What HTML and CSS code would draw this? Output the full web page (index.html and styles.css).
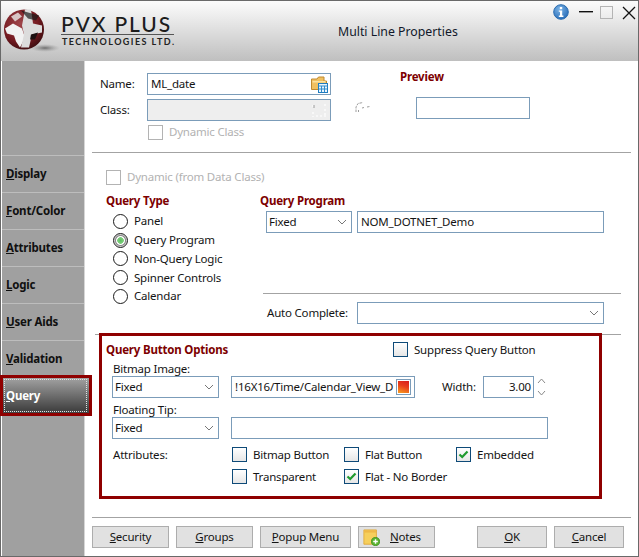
FILE: index.html
```html
<!DOCTYPE html>
<html lang="en">
<head>
<meta charset="utf-8">
<title>Multi Line Properties</title>
<link rel="stylesheet" href="styles.css">
</head>
<body>
<div class="window">
  <header class="titlebar">
    <svg class="globe" width="56" height="58" viewBox="0 0 56 58">
      <defs>
        <radialGradient id="ball" cx="0.4" cy="0.35" r="0.75">
          <stop offset="0" stop-color="#a0454a"/>
          <stop offset="0.6" stop-color="#741a20"/>
          <stop offset="1" stop-color="#2f0a0c"/>
        </radialGradient>
        <radialGradient id="shade">
          <stop offset="0" stop-color="#555" stop-opacity="0.8"/>
          <stop offset="1" stop-color="#999" stop-opacity="0"/>
        </radialGradient>
      </defs>
      <ellipse cx="41" cy="46" rx="15" ry="4" fill="url(#shade)"/>
      <g transform="translate(-3 -0.5)">
        <circle cx="23" cy="28" r="20" fill="url(#ball)"/>
        <path d="M4 27 L12 22 L21 27 L24 36 L19 46 L15 40 L13 34 L6 32 Z" fill="#f2f2f2"/>
        <path d="M10 15 L17 11 L21 15 L14 20 Z" fill="#d8c4c4"/>
        <path d="M24 8 L30 8 L32 22 L41 24 L41 31 L31 33 L28 46 L20 46 L23 33 L21 24 Z" fill="#dcdcdc"/>
        <path d="M20 9 L38 14 L35 19 L27 17 Z" fill="#191919" opacity="0.7"/>
        <path d="M30 33 L37 31 L34 38 L29 38 Z" fill="#1c1010"/>
      </g>
    </svg>
    <div class="brand">
      <div class="brand-name">PVX PLUS</div>
      <div class="brand-sub">TECHNOLOGIES LTD.</div>
    </div>
    <div class="dialog-title">Multi Line Properties</div>
    <div class="controls">
      <svg class="ctl-info" width="16" height="16" viewBox="0 0 16 16">
        <defs>
          <radialGradient id="inf" cx="0.4" cy="0.3" r="0.8">
            <stop offset="0" stop-color="#7db4e6"/>
            <stop offset="1" stop-color="#1f66b4"/>
          </radialGradient>
        </defs>
        <circle cx="8" cy="8" r="7.3" fill="url(#inf)" stroke="#2a6cb0"/>
        <rect x="6.8" y="3" width="2.4" height="2.2" fill="#fff"/>
        <path d="M5.8 6.4 H9.2 V11.6 H10.4 V13 H5.8 V11.6 H7 V7.8 H5.8 Z" fill="#fff"/>
      </svg>
      <svg class="ctl-min" width="14" height="2" viewBox="0 0 14 2"><rect width="14" height="1.4" fill="#111"/></svg>
      <svg class="ctl-max" width="13" height="13" viewBox="0 0 13 13"><rect x="0.5" y="0.5" width="12" height="12" fill="none" stroke="#b4b4b4"/></svg>
      <svg class="ctl-close" width="14" height="14" viewBox="0 0 14 14"><path d="M1 1 L13 13 M13 1 L1 13" stroke="#111" stroke-width="1.3" fill="none"/></svg>
    </div>
  </header>

  <div class="body">
    <nav class="sidebar">
      <div class="tab"><span><u>D</u>isplay</span></div>
      <div class="tab"><span><u>F</u>ont/Color</span></div>
      <div class="tab"><span><u>A</u>ttributes</span></div>
      <div class="tab"><span><u>L</u>ogic</span></div>
      <div class="tab"><span><u>U</u>ser Aids</span></div>
      <div class="tab"><span><u>V</u>alidation</span></div>
      <div class="tab tab-active"><span class="tab-focus"><u>Q</u>uery</span></div>
    </nav>

    <main class="content">
      <section class="top">
        <div class="identity">
          <div class="id-row">
            <label class="id-label">Name:</label>
            <div class="field field-name"><span>ML_date</span>
              <svg class="inline-icon" width="17" height="17" viewBox="0 0 17 17">
                <path d="M0.5 3 H6 L7.5 1 H13 V5 H15.5 V13.5 H0.5 Z" fill="#f0c060" stroke="#c08a30"/>
                <rect x="1.5" y="5" width="13" height="1.5" fill="#fbe2a0"/>
                <rect x="7.5" y="7.5" width="9" height="9" fill="#eaf4fc" stroke="#1e7cc0"/>
                <path d="M7.5 10 H16.5 M10.5 10 V16 M13.5 10 V16 M8 13 H16" stroke="#2f8ccc" fill="none"/>
              </svg>
            </div>
          </div>
          <div class="id-row">
            <label class="id-label">Class:</label>
            <div class="field field-name field-off">
              <svg class="inline-icon" width="17" height="17" viewBox="0 0 17 17">
                <path d="M2 3 V7 M2 10 V15 M5 14 H15 M14 2 V4 M14 7 V14" stroke="#fff" stroke-width="1.2" stroke-dasharray="2 2" fill="none"/>
                <path d="M3 3 V6" stroke="#9a9a9a" fill="none"/>
              </svg>
            </div>
          </div>
          <div class="check-row check-dyn-class">
            <i class="box box-off"></i><span class="off-text">Dynamic Class</span>
          </div>
        </div>
        <svg class="spin-mark" width="18" height="14" viewBox="0 0 18 14">
          <path d="M1 11 V6 L3 2.5 L8 1.5 M3.5 11 V9 M7 7 L9 6.5 M12 6 L15 5.5" stroke="#9c9c9c" stroke-width="1" stroke-dasharray="2.5 1" fill="none"/>
        </svg>
        <div class="preview">
          <div class="heading">Preview</div>
          <div class="field preview-box"></div>
        </div>
      </section>

      <div class="rule rule-a"></div>

      <div class="check-row check-dyn-data">
        <i class="box box-off"></i><span class="off-text">Dynamic (from Data Class)</span>
      </div>

      <section class="query">
        <div class="query-type">
          <div class="heading">Query Type</div>
          <ul class="radios">
            <li><i class="radio"></i>Panel</li>
            <li><i class="radio radio-on"></i>Query Program</li>
            <li><i class="radio"></i>Non-Query Logic</li>
            <li><i class="radio"></i>Spinner Controls</li>
            <li><i class="radio"></i>Calendar</li>
          </ul>
        </div>
        <div class="query-program">
          <div class="heading">Query Program</div>
          <div class="program-row">
            <div class="field select select-a"><span>Fixed</span>
              <svg class="chev" width="10" height="6" viewBox="0 0 10 6"><path d="M1 1 L5 5 L9 1" stroke="#777" fill="none"/></svg>
            </div>
            <div class="field field-program"><span>NOM_DOTNET_Demo</span></div>
          </div>
          <div class="rule rule-b"></div>
          <div class="auto-row">
            <label class="auto-label">Auto Complete:</label>
            <div class="field select field-program">
              <span></span>
              <svg class="chev" width="10" height="6" viewBox="0 0 10 6"><path d="M1 1 L5 5 L9 1" stroke="#777" fill="none"/></svg>
            </div>
          </div>
        </div>
      </section>

      <div class="rule rule-c"></div>

      <section class="options">
        <div class="opt-head">
          <div class="heading opt-title">Query Button Options</div>
          <div class="check-row"><i class="box"></i><span>Suppress Query Button</span></div>
        </div>
        <div class="opt-label">Bitmap Image:</div>
        <div class="opt-row">
          <div class="field select select-b"><span>Fixed</span>
            <svg class="chev" width="10" height="6" viewBox="0 0 10 6"><path d="M1 1 L5 5 L9 1" stroke="#777" fill="none"/></svg>
          </div>
          <div class="field field-bitmap"><span class="clip">!16X16/Time/Calendar_View_D</span>
            <span class="pick"><i class="pick-img"></i></span>
          </div>
          <span class="width-label">Width:</span>
          <div class="field field-width"><span>3.00</span></div>
          <div class="spinner">
            <svg width="9" height="6" viewBox="0 0 9 6"><path d="M1 5 L4.5 1 L8 5" stroke="#8a8a8a" fill="none"/></svg>
            <svg width="9" height="6" viewBox="0 0 9 6"><path d="M1 1 L4.5 5 L8 1" stroke="#8a8a8a" fill="none"/></svg>
          </div>
        </div>
        <div class="opt-label">Floating Tip:</div>
        <div class="opt-row">
          <div class="field select select-b"><span>Fixed</span>
            <svg class="chev" width="10" height="6" viewBox="0 0 10 6"><path d="M1 1 L5 5 L9 1" stroke="#777" fill="none"/></svg>
          </div>
          <div class="field field-tip"></div>
        </div>
        <div class="attrs">
          <div class="attrs-label">Attributes:</div>
          <div class="attrs-grid">
            <div class="check-row"><i class="box"></i><span>Bitmap Button</span></div>
            <div class="check-row"><i class="box"></i><span>Flat Button</span></div>
            <div class="check-row"><i class="box box-on"><svg width="11" height="9" viewBox="0 0 11 9"><path d="M1.5 4.5 L4.2 7 L9.5 1.5" stroke="#1f9a2e" stroke-width="2.2" fill="none"/></svg></i><span>Embedded</span></div>
            <div class="check-row"><i class="box"></i><span>Transparent</span></div>
            <div class="check-row"><i class="box box-on"><svg width="11" height="9" viewBox="0 0 11 9"><path d="M1.5 4.5 L4.2 7 L9.5 1.5" stroke="#1f9a2e" stroke-width="2.2" fill="none"/></svg></i><span>Flat - No Border</span></div>
          </div>
        </div>
      </section>

      <div class="rule rule-a rule-d"></div>

      <footer class="buttons">
        <button class="btn btn-sec"><u>S</u>ecurity</button>
        <button class="btn btn-sec"><u>G</u>roups</button>
        <button class="btn btn-popup"><u>P</u>opup Menu</button>
        <button class="btn btn-sec btn-notes">
          <svg width="17" height="17" viewBox="0 0 19 19">
            <path d="M1 1 H15 V13 L11 17 H1 Z" fill="#f6cf5c" stroke="#e0a93a"/>
            <rect x="1.5" y="1.5" width="13" height="2.5" fill="#eeb848"/>
            <circle cx="14" cy="14" r="4.5" fill="#5cb531" stroke="#3f8f20"/>
            <path d="M14 11.4 V16.6 M11.4 14 H16.6" stroke="#fff" stroke-width="1.6"/>
          </svg>
          <span class="notes-text"><u>N</u>otes</span>
        </button>
        <button class="btn btn-ok"><u>O</u>K</button>
        <button class="btn btn-ok"><u>C</u>ancel</button>
      </footer>
    </main>
  </div>
</div>
</body>
</html>
```
FILE: styles.css
```css
* { box-sizing: border-box; }
html, body { margin: 0; padding: 0; }
body {
  width: 639px;
  height: 557px;
  overflow: hidden;
  background: #fff;
  font-family: "Noto Sans", "Open Sans", sans-serif;
  font-size: 11.5px;
  letter-spacing: -0.2px;
  line-height: 16px;
  color: #141414;
}
u { text-decoration: underline; text-underline-offset: 1px; }

.window {
  width: 639px;
  height: 557px;
  border: 1px solid #696969;
  display: flex;
  flex-direction: column;
  background: #fff;
}

/* Title bar */
.titlebar {
  flex: none;
  height: 60px;
  display: flex;
  background: linear-gradient(#fbfbfb, #f0f0f0 20%, #bfbfbf);
  position: relative;
}
.globe { flex: none; margin: 1px 0 0 3px; }
.brand { flex: none; width: 113px; margin-left: 1px; padding-top: 12px; }
.brand-name {
  font-family: "Lato", "Noto Sans", sans-serif;
  font-size: 21px;
  line-height: 21px;
  font-weight: 500;
  letter-spacing: 1.9px;
  color: #1c1c1c;
  border-bottom: 1px solid #555;
  white-space: nowrap;
  height: 22px;
}
.brand-sub {
  font-family: "Lato", "Noto Sans", sans-serif;
  font-size: 9px;
  line-height: 10px;
  font-weight: 700;
  letter-spacing: 1.45px;
  margin-top: 2px;
  padding-left: 1px;
  color: #222;
  white-space: nowrap;
}
.dialog-title {
  flex: none;
  margin: 23px 0 0 164px;
  width: 130px;
  white-space: nowrap;
  font-size: 12.3px;
  letter-spacing: 0;
  color: #10182a;
}
.controls { margin-left: auto; display: flex; align-items: flex-start; }
.ctl-info { margin: 3px 10px 0 0; }
.ctl-min { margin: 10px 7px 0 0; }
.ctl-max { margin: 5px 9px 0 0; }
.ctl-close { margin: 5px 2px 0 0; }

/* Body */
.body { flex: 1; display: flex; min-height: 0; }

.sidebar {
  flex: none;
  width: 83px;
  margin-left: 1px;
  padding-top: 94px;
  background: #a0a0a0;
  border-right: 1px solid #d6d6d6;
}
.tab {
  height: 37px;
  border-top: 1px solid #bdbdbd;
  padding-left: 4px;
  display: flex;
  align-items: center;
  font-weight: 700;
  color: #101010;
}
.tab-active {
  position: relative;
  z-index: 2;
  height: 41px;
  margin: -2px -8px -2px -2px;
  border: 3px solid #8f0000;
  padding: 1px;
  background: linear-gradient(#a2a2a2, #444 90%);
  color: #fff;
}
.tab-focus {
  flex: 1;
  height: 33px;
  margin-right: 1px;
  border: 1px dotted #e4e4e4;
  padding-left: 1px;
  display: flex;
  align-items: center;
  white-space: pre;
}

.content { flex: 1; padding-top: 12px; min-width: 0; }

.heading { font-weight: 700; color: #7d0000; white-space: nowrap; }
.rule { height: 1px; background: #a3a3a3; }
.rule-a { margin-left: 7px; width: 539px; }
.rule-b { width: 358px; margin: 60px 0 0 3px; }
.rule-c { margin: 10px 0 0 10px; width: 526px; }
.rule-d { margin-top: 18px; }

/* Fields */
.field {
  display: flex;
  align-items: center;
  height: 22px;
  border: 1px solid #7b9cb9;
  background: #fff;
  padding: 0 3px;
  white-space: nowrap;
}
.select { justify-content: space-between; padding: 0 2px 0 2px; }
.chev { flex: none; margin-right: 2px; }
.inline-icon { flex: none; margin-left: auto; margin-right: -1px; }

/* Top section */
.top { height: 79px; margin-left: 15px; display: flex; }
.identity { width: 231px; }
.id-row { display: flex; margin-bottom: 4px; }
.id-label { width: 47px; padding-top: 3px; }
.field-name { width: 184px; }
.field-off { background: #eee; }
.check-row { display: flex; align-items: center; white-space: nowrap; }
.box {
  flex: none;
  width: 15px;
  height: 15px;
  margin-right: 6px;
  border: 1px solid #0e4a78;
  background: linear-gradient(#fff, #e6e6e6);
  display: flex;
  align-items: center;
  justify-content: center;
}
.box-off { border-color: #b3b3b3; background: #fff; }
.off-text { color: #b2b2b2; }
.check-dyn-class { margin: -1px 0 0 48px; }
.check-dyn-data { margin: 16px 0 0 21px; }
.spin-mark { flex: none; margin: 28px 0 0 24px; }
.preview { margin-left: 27px; margin-top: -4px; }
.preview-box { width: 114px; margin: 12px 0 0 16px; }

/* Query */
.query { display: flex; margin: 8px 0 0 21px; }
.query-type { width: 154px; }
.radios { list-style: none; margin: 3px 0 0 7px; padding: 0; }
.radios li { display: flex; align-items: center; height: 18.75px; }
.radio {
  flex: none;
  width: 15px;
  height: 15px;
  margin-right: 6px;
  border: 1px solid #1a1a1a;
  border-radius: 50%;
  background: #fff;
}
.radio-on {
  background: radial-gradient(circle, #5cc05c 0, #7fce7f 3px, #fff 3.6px, #fff 4px, #8a8a8a 5px, #ededed 6.5px);
}
.query-program { width: 365px; }
.program-row { display: flex; margin: 2px 0 0 6px; }
.select-a { width: 86px; margin-right: 5px; }
.field-program { width: 247px; }
.auto-row { display: flex; align-items: center; margin: 8px 0 0 7px; }
.auto-label { width: 90px; white-space: nowrap; }

/* Options */
.options {
  position: relative;
  width: 503px;
  height: 166px;
  margin: -2px 0 0 14px;
  border: 3px solid #8f0000;
  background: #fff;
  padding: 6px 0 0 4px;
}
.opt-head { display: flex; align-items: center; height: 15px; }
.opt-title { width: 287px; }
.opt-label { margin: 4px 0 0 7px; height: 15px; line-height: 15px; }
.opt-row { display: flex; align-items: center; margin-left: 6px; }
.select-b { width: 107px; margin-right: 12px; }
.field-bitmap { width: 184px; padding-right: 3px; }
.clip { display: block; width: 158px; }
.pick {
  flex: none;
  width: 15px;
  height: 16px;
  margin-left: 3px;
  padding: 1px;
  border: 1px solid #7b9cb9;
  display: block;
}
.pick-img { display: block; width: 11px; height: 12px; background: linear-gradient(20deg, #f8a020, #e8401c 55%, #d81c1c); }
.width-label { width: 41px; margin-left: 27px; }
.field-width { width: 51px; justify-content: flex-end; padding-right: 2px; }
.spinner { display: flex; flex-direction: column; gap: 6px; margin-left: 3px; }
.field-tip { width: 317px; }
.attrs { display: flex; margin: 8px 0 0 7px; }
.attrs-label { width: 119px; }
.attrs-grid { display: grid; grid-template-columns: 112px 112px auto; grid-auto-rows: 22px; }
.attrs-grid .check-row { align-items: flex-start; }

/* Buttons */
.buttons { display: flex; margin: 8px 0 0 7px; }
.btn {
  height: 22px;
  padding: 0;
  border: 1px solid #adadad;
  background: #e1e1e1;
  font: inherit;
  letter-spacing: inherit;
  color: #141414;
  display: flex;
  align-items: center;
  justify-content: center;
}
.btn-sec { width: 77px; margin-right: 7px; }
.btn-popup { width: 91px; margin-right: 7px; }
.btn-notes { justify-content: flex-start; padding-left: 4px; margin-right: 42px; }
.notes-text { margin-left: 10px; }
.btn-ok { width: 70px; margin-right: 7px; }
```
